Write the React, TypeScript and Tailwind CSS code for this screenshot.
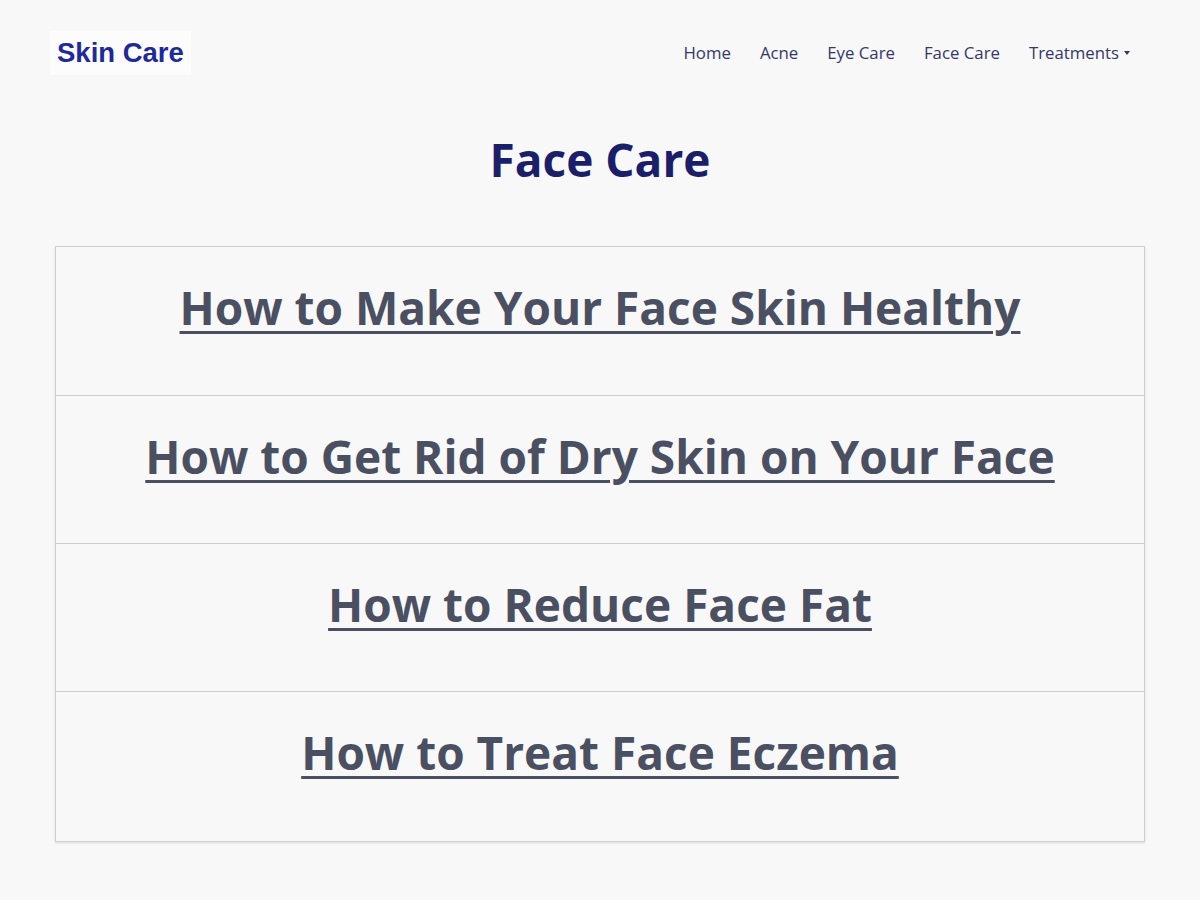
import React from "react";

const items = [
  "How to Make Your Face Skin Healthy",
  "How to Get Rid of Dry Skin on Your Face",
  "How to Reduce Face Fat",
  "How to Treat Face Eczema",
];

export default function App() {
  return (
    <div className="min-h-[900px] bg-[#f8f8f9]" style={{ fontFamily: '"Open Sans", sans-serif' }}>
      <header className="flex items-center justify-between pl-[50px] pr-[70px] h-[106px]">
        <div className="bg-[#fcfcfd] px-[7px] py-[1px] text-[27.5px] font-bold text-[#1f2a9a]" style={{ fontFamily: '"Liberation Sans", Arial, sans-serif' }}>
          Skin Care
        </div>
        <nav className="flex items-center gap-[29px] text-[16.8px] text-[#33376a]">
          <a>Home</a>
          <a>Acne</a>
          <a>Eye Care</a>
          <a>Face Care</a>
          <a className="flex items-center gap-[5px]">
            Treatments
            <span className="inline-block w-0 h-0 border-l-[3.5px] border-r-[3.5px] border-t-[4px] border-l-transparent border-r-transparent border-t-[#33376a]" />
          </a>
        </nav>
      </header>
      <h1 className="text-center text-[46px] font-bold text-[#1b1f6a] leading-none mt-[30px]">Face Care</h1>
      <div className="mx-[55px] mt-[64px] border border-[#cfcfcf] shadow-[0_1px_2px_rgba(0,0,0,0.12)]">
        {items.map((t, i) => (
          <div key={i} className={`h-[148px] flex justify-center pt-[30px] ${i > 0 ? "border-t border-[#cfcfcf]" : ""} ${i === 3 ? "h-[150px]" : ""}`}>
            <a className="text-[46px] font-bold text-[#4a5061] underline decoration-[3px] underline-offset-[6px] leading-[60px] h-fit">
              {t}
            </a>
          </div>
        ))}
      </div>
    </div>
  );
}
